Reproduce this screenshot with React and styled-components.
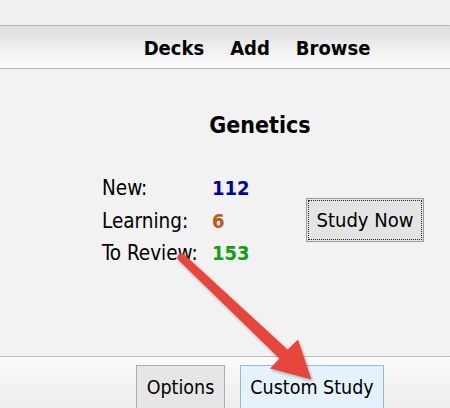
import React from "react";
import styled, { createGlobalStyle } from "styled-components";

const Global = createGlobalStyle`
  html, body { margin: 0; padding: 0; overflow: hidden; background: #f2f2f2; }
  body { font-family: "DejaVu Sans", "Liberation Sans", sans-serif; font-stretch: condensed; color: #000; }
`;

const Frame = styled.div`
  position: relative;
  width: 450px;
  height: 408px;
  overflow: hidden;
  display: flex;
  flex-direction: column;
  background: #f2f2f2;
`;

const TopStrip = styled.div`
  height: 25px;
  background: #f0f0f0;
`;

const Toolbar = styled.nav`
  height: 44px;
  box-sizing: border-box;
  border-top: 1px solid #b8b8b8;
  border-bottom: 1px solid #b8b8b8;
  background: linear-gradient(#dcdcdc, #f0f0f0 55%, #fbfbfb);
  display: flex;
  align-items: center;
  justify-content: center;
  gap: 26px;
  padding: 2px 0 0 64px;
`;

const NavLink = styled.span`
  font-weight: bold;
  font-size: 20px;
  line-height: 24px;
`;

const Main = styled.main`
  flex: 1;
  display: flex;
  flex-direction: column;
  padding: 43px 0 0 70px;
`;

const Title = styled.h1`
  margin: 0;
  text-align: center;
  font-size: 23px;
  line-height: 27px;
  font-weight: bold;
`;

const Stats = styled.div`
  margin: 33px 0 0 32px;
  display: grid;
  grid-template-columns: 110px 94px 118px;
  grid-auto-rows: 32.5px;
  align-items: center;
`;

const Label = styled.span`
  font-size: 20.5px;
  line-height: 32.5px;
`;

const Count = styled.span`
  font-size: 20px;
  line-height: 32.5px;
  font-weight: bold;
  color: ${(p) => p.$color};
`;

const StudyButton = styled.button`
  grid-column: 3;
  grid-row: 1 / span 3;
  align-self: center;
  margin-top: -2px;
  width: 118px;
  height: 44px;
  font-family: inherit;
  font-stretch: condensed;
  font-size: 20px;
  color: #000;
  background: #e4e4e4;
  border: 1px solid #9a9a9a;
  outline: 1px dotted #222;
  outline-offset: -3px;
  padding: 0;
`;

const BottomBar = styled.footer`
  height: 52px;
  box-sizing: border-box;
  border-top: 1px solid #bdbdbd;
  background: linear-gradient(#fbfbfb, #ececec);
  display: flex;
  justify-content: center;
  align-items: flex-start;
  gap: 15px;
  padding: 8px 0 0 70px;
`;

const BarButton = styled.button`
  flex: none;
  width: ${(p) => p.$w}px;
  height: 48px;
  padding: 12px 0 0 0;
  font-family: inherit;
  font-stretch: condensed;
  font-size: 19.5px;
  line-height: 20px;
  color: #000;
  display: flex;
  justify-content: center;
  align-items: flex-start;
  white-space: nowrap;
  background: ${(p) => (p.$active ? "#e5f1fb" : "#e6e6e6")};
  border: 1px solid ${(p) => (p.$active ? "#8dbcec" : "#adadad")};
`;

const Arrow = styled.svg`
  position: absolute;
  left: 0;
  top: 0;
  width: 450px;
  height: 408px;
  pointer-events: none;
`;

export default function App() {
  return (
    <>
      <Global />
      <Frame>
        <TopStrip />
        <Toolbar>
          <NavLink>Decks</NavLink>
          <NavLink>Add</NavLink>
          <NavLink>Browse</NavLink>
        </Toolbar>
        <Main>
          <Title>Genetics</Title>
          <Stats>
            <Label>New:</Label>
            <Count $color="#0000a6">112</Count>
            <StudyButton>Study Now</StudyButton>
            <Label>Learning:</Label>
            <Count $color="#c35617">6</Count>
            <Label>To Review:</Label>
            <Count $color="#11a011">153</Count>
          </Stats>
        </Main>
        <BottomBar>
          <BarButton $w={89}>Options</BarButton>
          <BarButton $w={144} $active>Custom Study</BarButton>
        </BottomBar>
        <Arrow viewBox="0 0 450 408">
          <defs>
            <filter id="sh" x="-20%" y="-20%" width="140%" height="140%">
              <feDropShadow dx="1" dy="1.5" stdDeviation="1.5" floodColor="#000" floodOpacity="0.3" />
            </filter>
          </defs>
          <path
            filter="url(#sh)"
            fill="#e5473d"
            d="M183.7 254.1 L287.6 349.6 L298 339.5 L311.5 379.5 L270 368.5 L279.4 358.4 L178.3 259.9 A4 4 0 0 1 183.7 254.1 Z"
          />
        </Arrow>
      </Frame>
    </>
  );
}
